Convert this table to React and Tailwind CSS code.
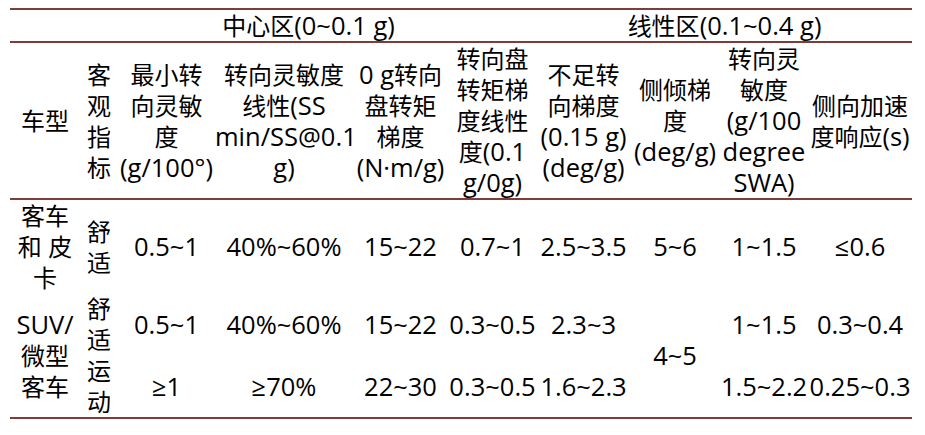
const cjk = /([\u3400-\u9fff]+)/;

// CJK runs are a touch smaller than the Latin glyphs in the source table
function Mixed({ text }) {
  return text.split(cjk).map((part, i) =>
    i % 2 ? (
      <span key={i} className="text-[24px]">
        {part}
      </span>
    ) : (
      part
    )
  );
}

function Lines({ lines }) {
  return lines.map((line, i) => (
    <div key={i} className="whitespace-nowrap">
      <Mixed text={line} />
    </div>
  ));
}

const headers = [
  { w: 'w-[70px]', lines: ['车型'] },
  { w: 'w-[38px]', lines: ['客', '观', '指', '标'] },
  { w: 'w-[97px]', lines: ['最小转', '向灵敏', '度', '(g/100°)'] },
  { w: 'w-[138px]', lines: ['转向灵敏度', '线性(SS', 'min/SS@0.1', 'g)'] },
  { w: 'w-[95px]', lines: ['0 g转向', '盘转矩', '梯度', '(N·m/g)'] },
  { w: 'w-[89px]', lines: ['转向盘', '转矩梯', '度线性', '度(0.1', 'g/0g)'] },
  { w: 'w-[93px]', lines: ['不足转', '向梯度', '(0.15 g)', '(deg/g)'] },
  { w: 'w-[90px]', lines: ['侧倾梯', '度', '(deg/g)'] },
  { w: 'w-[88px]', lines: ['转向灵', '敏度', '(g/100', 'degree', 'SWA)'] },
  { w: 'w-[104px]', lines: ['侧向加速', '度响应(s)'] },
];

const cell = 'p-0 text-center align-middle font-normal whitespace-nowrap';
const line = 'border-[#7e3d38]';

export default function App() {
  return (
    <div className="min-h-[435px] bg-white pt-2 px-[10px] text-black text-[25.5px] leading-[31px] font-['Open_Sans','Noto_Sans_CJK_SC',sans-serif]">
      <table className="w-[902px] table-fixed border-separate border-spacing-0">
        <colgroup>
          {headers.map((h, i) => (
            <col key={i} className={h.w} />
          ))}
        </colgroup>
        <thead>
          <tr>
            <th className={`${cell} ${line} h-[32px] border-t-2 border-b-2`} />
            <th colSpan={5} className={`${cell} ${line} h-[32px] border-t-2 border-b-2`}>
              <Mixed text="中心区(0~0.1 g)" />
            </th>
            <th colSpan={4} className={`${cell} ${line} h-[32px] border-t-2 border-b-2`}>
              <Mixed text="线性区(0.1~0.4 g)" />
            </th>
          </tr>
          <tr>
            {headers.map((h, i) => (
              <th key={i} className={`${cell} ${line} h-[154px] border-b-2`}>
                <Lines lines={h.lines} />
              </th>
            ))}
          </tr>
        </thead>
        <tbody>
          <tr>
            <td className={`${cell} h-[93px]`}>
              <Lines lines={['客车', '和 皮', '卡']} />
            </td>
            <td className={cell}>
              <Lines lines={['舒', '适']} />
            </td>
            <td className={cell}>0.5~1</td>
            <td className={cell}>40%~60%</td>
            <td className={cell}>15~22</td>
            <td className={cell}>0.7~1</td>
            <td className={cell}>2.5~3.5</td>
            <td className={cell}>5~6</td>
            <td className={cell}>1~1.5</td>
            <td className={cell}>≤0.6</td>
          </tr>
          <tr>
            <td rowSpan={2} className={`${cell} ${line} border-b-2`}>
              <Lines lines={['SUV/', '微型', '客车']} />
            </td>
            <td className={`${cell} h-[62px]`}>
              <Lines lines={['舒', '适']} />
            </td>
            <td className={cell}>0.5~1</td>
            <td className={cell}>40%~60%</td>
            <td className={cell}>15~22</td>
            <td className={cell}>0.3~0.5</td>
            <td className={cell}>2.3~3</td>
            <td rowSpan={2} className={`${cell} ${line} border-b-2`}>
              4~5
            </td>
            <td className={cell}>1~1.5</td>
            <td className={cell}>0.3~0.4</td>
          </tr>
          <tr>
            <td className={`${cell} ${line} h-[62px] border-b-2`}>
              <Lines lines={['运', '动']} />
            </td>
            <td className={`${cell} ${line} border-b-2`}>≥1</td>
            <td className={`${cell} ${line} border-b-2`}>≥70%</td>
            <td className={`${cell} ${line} border-b-2`}>22~30</td>
            <td className={`${cell} ${line} border-b-2`}>0.3~0.5</td>
            <td className={`${cell} ${line} border-b-2`}>1.6~2.3</td>
            <td className={`${cell} ${line} border-b-2`}>1.5~2.2</td>
            <td className={`${cell} ${line} border-b-2`}>0.25~0.3</td>
          </tr>
        </tbody>
      </table>
    </div>
  );
}
